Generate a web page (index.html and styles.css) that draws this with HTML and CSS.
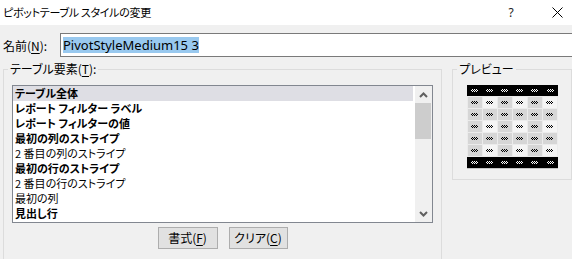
FILE: index.html
```html
<!DOCTYPE html>
<html>
<head>
    <title>ピボットテーブル スタイルの変更</title>
    <link rel="stylesheet" href="styles.css">
</head>
<body>

<div class="titlebar">
    <span class="title">ピボットテーブル スタイルの変更</span>
    <div class="caption-btns">
        <span class="cap-btn help">?</span>
        <span class="cap-btn close">
            <svg width="11" height="11" viewBox="0 0 11 11"><path d="M0.5 0.5 L10.5 10.5 M10.5 0.5 L0.5 10.5" stroke="#000" stroke-width="1" fill="none"/></svg>
        </span>
    </div>
</div>

<div class="name-row">
    <label class="name-label">名前(<u>N</u>):</label>
    <div class="name-input"><span class="sel">PivotStyleMedium15 3</span></div>
</div>

<div class="main">
    <fieldset class="group elements">
        <legend>テーブル要素(<u>T</u>):</legend>
        <div class="listbox">
            <ul class="items">
                <li class="b selected">テーブル全体</li>
                <li class="b">レポート フィルター ラベル</li>
                <li class="b">レポート フィルターの値</li>
                <li class="b">最初の列のストライプ</li>
                <li>2 番目の列のストライプ</li>
                <li class="b">最初の行のストライプ</li>
                <li>2 番目の行のストライプ</li>
                <li>最初の列</li>
                <li class="b">見出し行</li>
            </ul>
            <div class="scrollbar">
                <div class="sb-arrow">
                    <svg width="9" height="6" viewBox="0 0 9 6"><path d="M1 5 L4.5 1.5 L8 5" stroke="#606060" stroke-width="2" fill="none"/></svg>
                </div>
                <div class="sb-thumb"></div>
                <div class="sb-track"></div>
                <div class="sb-arrow">
                    <svg width="9" height="6" viewBox="0 0 9 6"><path d="M1 1 L4.5 4.5 L8 1" stroke="#606060" stroke-width="2" fill="none"/></svg>
                </div>
            </div>
        </div>
        <div class="buttons">
            <button class="btn">書式(<u>F</u>)</button>
            <button class="btn">クリア(<u>C</u>)</button>
        </div>
    </fieldset>

    <fieldset class="group preview">
        <legend>プレビュー</legend>
        <div class="pv-table">
            <div class="pv-head">
                <span><i></i></span><span><i></i></span><span><i></i></span><span><i></i></span><span><i></i></span><span><i></i></span>
            </div>
            <div class="pv-body">
                <span><i></i></span><span class="lt"><i></i></span><span><i></i></span><span class="lt"><i></i></span><span><i></i></span><span class="lt"><i></i></span>
                <span><i></i></span><span><i></i></span><span><i></i></span><span><i></i></span><span><i></i></span><span><i></i></span>
                <span><i></i></span><span class="lt"><i></i></span><span><i></i></span><span class="lt"><i></i></span><span><i></i></span><span class="lt"><i></i></span>
                <span><i></i></span><span><i></i></span><span><i></i></span><span><i></i></span><span><i></i></span><span><i></i></span>
                <span><i></i></span><span class="lt"><i></i></span><span><i></i></span><span class="lt"><i></i></span><span><i></i></span><span class="lt"><i></i></span>
            </div>
            <div class="pv-foot">
                <span><i></i></span><span><i></i></span><span><i></i></span><span><i></i></span><span><i></i></span><span><i></i></span>
            </div>
        </div>
    </fieldset>
</div>

</body>
</html>
```

FILE: styles.css
```css
body {
    margin: 0;
    width: 572px;
    height: 259px;
    overflow: hidden;
    background-color: #f0f0f0;
    font-family: "Noto Sans CJK JP", "Noto Sans", sans-serif;
    font-size: 12px;
    font-feature-settings: "palt";
    color: #000;
}

u {
    text-decoration: underline;
    text-underline-offset: 2px;
}

/* window caption */
.titlebar {
    display: flex;
    align-items: center;
    height: 25px;
    padding-left: 3px;
    background-color: #fff;
}

.title {
    font-size: 11px;
    letter-spacing: -0.3px;
    line-height: 25px;
}

.caption-btns {
    display: flex;
    margin-left: auto;
    margin-right: -8px;
}

.cap-btn {
    display: flex;
    align-items: center;
    justify-content: center;
    width: 46px;
    height: 25px;
}

.help {
    font-family: "Noto Sans", sans-serif;
    font-size: 12px;
    color: #222;
}

/* name field */
.name-row {
    display: flex;
    align-items: center;
    margin-top: 8px;
    padding-left: 3px;
}

.name-label {
    width: 57px;
}

.name-input {
    flex: 1;
    display: flex;
    align-items: center;
    height: 24px;
    box-sizing: border-box;
    margin-right: -10px;
    padding-left: 2px;
    border: 1px solid #7a7a7a;
    background-color: #fff;
}

.sel {
    font-family: "Noto Sans", sans-serif;
    font-size: 13px;
    line-height: 16px;
    background-color: #99c9ef;
}

/* group boxes */
.main {
    display: flex;
    margin-top: 5px;
}

.group {
    margin: 0;
    border: 1px solid #dcdcdc;
    padding: 9px 8px;
    box-sizing: border-box;
    min-width: 0;
}

.group legend {
    margin-left: -4px;
    padding: 0 2px;
    line-height: 14px;
}

.elements {
    width: 440px;
    height: 197px;
    margin-left: 3px;
    border-bottom: none;
}

.preview {
    width: 120px;
    height: 118px;
    margin-left: 10px;
}

/* list of table elements */
.listbox {
    display: flex;
    width: 421px;
    height: 138px;
    box-sizing: border-box;
    border: 1px solid #828790;
    background-color: #fff;
}

.items {
    flex: 1;
    list-style: none;
    margin: 0;
    padding: 0;
    font-size: 11px;
}

.items li {
    height: 15px;
    line-height: 15px;
    padding-left: 2px;
    margin-right: 2px;
    white-space: nowrap;
}

.items li.b {
    font-weight: bold;
}

.items li.selected {
    background-color: #dedee4;
}

.scrollbar {
    display: flex;
    flex-direction: column;
    width: 17px;
    background-color: #f0f0f0;
}

.sb-arrow {
    display: flex;
    align-items: center;
    justify-content: center;
    height: 17px;
}

.sb-thumb {
    height: 36px;
    margin: 0 1px 0 0;
    background-color: #cdcdcd;
}

.sb-track {
    flex: 1;
}

/* format / clear */
.buttons {
    display: flex;
    justify-content: center;
    gap: 11px;
    width: 421px;
    margin-top: 4px;
}

.btn {
    height: 22px;
    padding: 0;
    border: 1px solid #adadad;
    background-color: #e1e1e1;
    font-family: inherit;
    font-size: 12px;
    font-feature-settings: "palt";
    line-height: 20px;
    color: #000;
}

.btn:first-child {
    width: 60px;
}

.btn:last-child {
    width: 59px;
}

/* preview table */
.pv-table {
    width: 91px;
    margin: 0 auto;
}

.pv-head,
.pv-foot {
    display: grid;
    grid-template-columns: repeat(6, 1fr);
    height: 11px;
    background-color: #000;
}

.pv-foot {
    height: 12px;
    box-sizing: border-box;
    border-bottom: 1px solid #c4c4c4;
}

.pv-body {
    display: grid;
    grid-template-columns: repeat(6, 14px);
    grid-auto-rows: 11px;
    gap: 1px;
    padding: 1px;
    background-color: #ebebeb;
}

.pv-table span {
    display: flex;
    align-items: center;
    justify-content: center;
}

.pv-body span {
    background-color: #d6d6d6;
}

.pv-body span.lt {
    background-color: #f4f4f4;
}

.pv-table i {
    display: block;
    width: 7px;
    height: 3px;
    background: repeating-conic-gradient(#000 0 25%, transparent 0 50%) 0 0 / 2px 2px;
}

.pv-head i,
.pv-foot i {
    background: repeating-conic-gradient(#fff 0 25%, transparent 0 50%) 0 0 / 2px 2px;
}
```
